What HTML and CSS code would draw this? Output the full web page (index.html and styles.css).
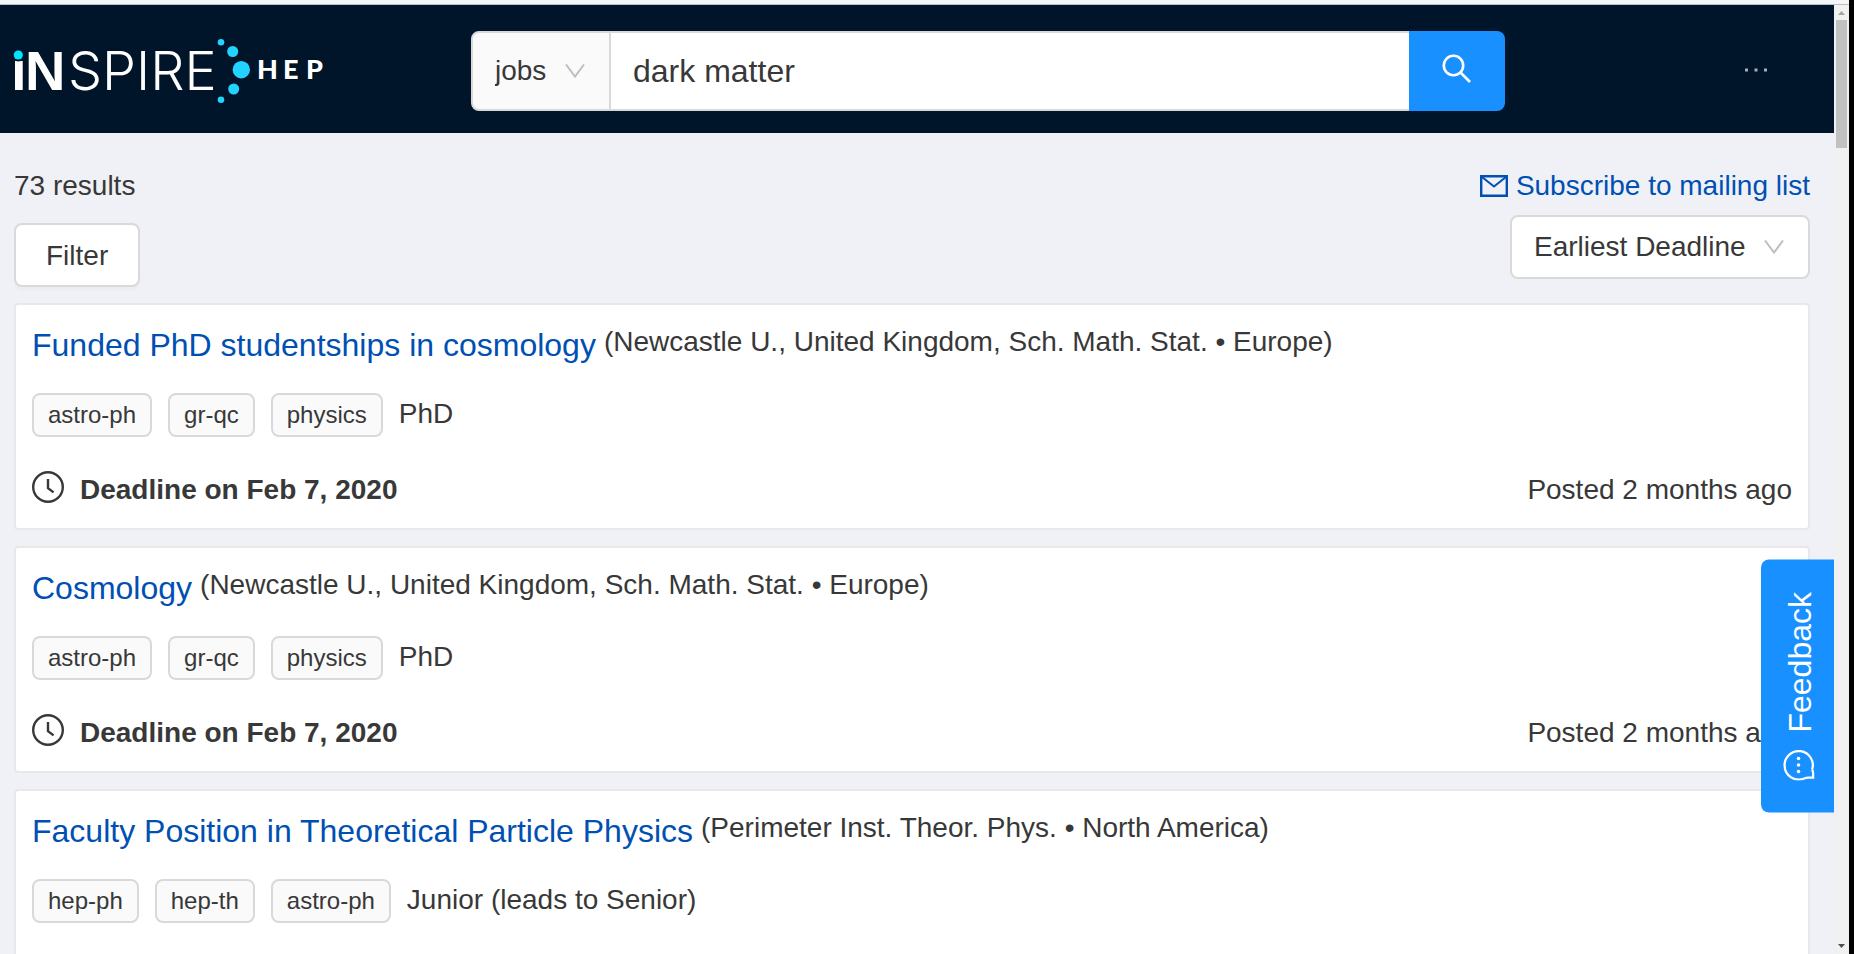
FILE: index.html
```html
<!DOCTYPE html>
<html lang="en">
<head>
<meta charset="utf-8">
<title>dark matter - jobs - INSPIRE</title>
<link rel="stylesheet" href="styles.css">
</head>
<body>
<div class="window">
  <div class="window-top"></div>
  <div class="viewport">
    <div class="page">
      <header class="header">
        <a class="logo" href="#" aria-label="INSPIRE HEP home">
          <svg width="324" height="70" viewBox="0 0 324 70">
            <g class="logo-text">
              <text class="logo-bold" x="11" y="55">ı</text>
              <text class="logo-bold" x="25" y="55">N</text>
              <text class="logo-light" x="68" y="55">SPIRE</text>
              <text class="logo-hep" x="257" y="44">H</text>
              <text class="logo-hep" x="283" y="44">E</text>
              <text class="logo-hep" x="306" y="44">P</text>
            </g>
            <circle cx="18.3" cy="20" r="6.4" fill="#001529"/>
            <circle cx="18.3" cy="20" r="4.6" fill="#00e5ff"/>
            <g fill="#22d3ff">
              <circle cx="221" cy="7.3" r="3.3"/>
              <circle cx="232.7" cy="16.5" r="5.5"/>
              <circle cx="241.3" cy="34.7" r="8.7"/>
              <circle cx="233.7" cy="54" r="5.5"/>
              <circle cx="221" cy="64.7" r="3.3"/>
            </g>
          </svg>
        </a>
        <form class="search">
          <div class="select-box search-scope">
            <select aria-label="Collection"><option>jobs</option></select>
            <svg class="chevron" width="20" height="14" viewBox="0 0 20 14"><path d="M1 0.5 10 12.6 19 0.5"/></svg>
          </div>
          <input class="search-input" type="text" aria-label="Search" value="dark matter">
          <button class="search-button" type="button" aria-label="Search">
            <svg width="30" height="30" viewBox="0 0 30 30"><circle cx="11.5" cy="11.5" r="9.7"/><path d="M18.5 18.5 28 28"/></svg>
          </button>
        </form>
        <button class="more" type="button" aria-label="Menu">
          <svg width="22" height="4" viewBox="0 0 22 4"><path d="M0 .5h3v3H0zM9.500 .5h3v3h-3zM19 .5h3v3h-3z"/></svg>
        </button>
      </header>
      <main class="content">
        <div class="toolbar">
          <div class="toolbar-left">
            <div>73 results</div>
            <button class="filter" type="button">Filter</button>
          </div>
          <div class="toolbar-right">
            <a class="subscribe" href="#">
              <svg width="28" height="22" viewBox="0 0 28 22"><path d="M1.200 1.200h25.600v19.600H1.200z"/><path class="flap" d="M2 2l12 9.500L26 2"/></svg>
              Subscribe to mailing list
            </a>
            <div class="select-box sort">
              <select aria-label="Sort by"><option>Earliest Deadline</option></select>
              <svg class="chevron" width="20" height="14" viewBox="0 0 20 14"><path d="M1 0.5 10 12.6 19 0.5"/></svg>
            </div>
          </div>
        </div>
        <article class="card">
          <div class="card-head"><a class="card-title" href="#">Funded PhD studentships in cosmology</a><span>(Newcastle U., United Kingdom, Sch. Math. Stat. • Europe)</span></div>
          <div class="tags"><span class="tag">astro-ph</span><span class="tag">gr-qc</span><span class="tag">physics</span><span>PhD</span></div>
          <div class="card-foot">
            <strong><svg class="clock" width="32" height="32" viewBox="0 0 32 32"><circle cx="16" cy="16" r="14.800"/><path d="M16 8v9.200l5.600 4.200"/></svg>Deadline on Feb 7, 2020</strong>
            <span>Posted 2 months ago</span>
          </div>
        </article>
        <article class="card">
          <div class="card-head"><a class="card-title" href="#">Cosmology</a><span>(Newcastle U., United Kingdom, Sch. Math. Stat. • Europe)</span></div>
          <div class="tags"><span class="tag">astro-ph</span><span class="tag">gr-qc</span><span class="tag">physics</span><span>PhD</span></div>
          <div class="card-foot">
            <strong><svg class="clock" width="32" height="32" viewBox="0 0 32 32"><circle cx="16" cy="16" r="14.800"/><path d="M16 8v9.200l5.600 4.200"/></svg>Deadline on Feb 7, 2020</strong>
            <span>Posted 2 months ago</span>
          </div>
        </article>
        <article class="card card-last">
          <div class="card-head"><a class="card-title" href="#">Faculty Position in Theoretical Particle Physics</a><span>(Perimeter Inst. Theor. Phys. • North America)</span></div>
          <div class="tags"><span class="tag">hep-ph</span><span class="tag">hep-th</span><span class="tag">astro-ph</span><span>Junior (leads to Senior)</span></div>
        </article>
      </main>
      <button class="feedback" type="button">
        <svg width="32" height="32" viewBox="0 0 34 34"><path d="M15.500 1.700A15 15 0 0 0 2.200 22.500Q3.200 24.500 3.200 27v5h4.600Q9.500 32 11.500 30.900"/><path d="M15.500 1.700A15 15 0 1 1 11.500 30.900"/><g class="dots"><circle cx="9.500" cy="16.500" r="1.900"/><circle cx="16.500" cy="16.500" r="1.900"/><circle cx="23.500" cy="16.500" r="1.900"/></g></svg>
        <span>Feedback</span>
      </button>
    </div>
    <div class="scrollbar">
      <svg width="7" height="4" viewBox="0 0 7 4"><path fill="#a3a3a3" d="M0 4 3.500 0 7 4z"/></svg>
      <div class="track"><div class="thumb"></div></div>
      <svg width="7" height="4" viewBox="0 0 7 4"><path fill="#505050" d="M0 0 3.500 4 7 0z"/></svg>
    </div>
  </div>
</div>
</body>
</html>
```
FILE: styles.css
```css
* { box-sizing: border-box; }

body {
  margin: 0;
  background: #000;
  color: #383838;
  font: 28px/42px "Liberation Sans", Arial, sans-serif;
}

button, input, select { font: inherit; color: inherit; margin: 0; }
a { color: #0050b3; text-decoration: none; }
svg { flex: none; }

.window {
  display: flex;
  flex-direction: column;
  height: 100vh;
  margin-right: 5px;
  overflow: hidden;
}
.window-top { flex: none; height: 5px; background: #f3f6f8; border-bottom: 1px solid #b6bec8; }
.viewport { display: flex; flex: 1; min-height: 0; }
.page { position: relative; flex: 1; min-width: 0; overflow: hidden; background: #f0f1f6; }

.header {
  display: grid;
  grid-template-columns: 471fr 1034fr 329fr;
  align-items: center;
  height: 128px;
  padding-top: 2px;
  background: #001529;
}
.logo { display: flex; }
.logo-text { fill: #fff; font-family: Inter, sans-serif; }
.logo-bold { font-family: "Liberation Sans", Arial, sans-serif; font-size: 56px; font-weight: 700; }
.logo-light { font-size: 54px; font-weight: 300; }
.logo-hep { font-family: Lato, sans-serif; font-size: 27px; font-weight: 900; }

.search { display: flex; height: 80px; margin-top: 2px; }
.select-box { position: relative; display: flex; border: 2px solid #d9d9d9; border-radius: 8px; }
.select-box select {
  appearance: none;
  border: 0;
  border-radius: 8px;
  background: transparent;
  padding: 0 62px 0 22px;
}
.chevron { position: absolute; right: 24px; top: 50%; margin-top: -7px; fill: none; stroke: #bfbfbf; stroke-width: 2; pointer-events: none; }
.search-scope { background: #fafafa; border-radius: 8px 0 0 8px; }
.search-input {
  flex: 1;
  min-width: 0;
  border: solid #d9d9d9;
  border-width: 2px 0;
  border-radius: 0;
  padding: 0 22px;
  background: #fff;
  font-size: 32px;
}
.search-button {
  display: flex;
  align-items: center;
  justify-content: center;
  width: 96px;
  padding: 0 0 4px;
  border: 0;
  border-radius: 0 8px 8px 0;
  background: #1890ff;
}
.search-button svg { fill: none; stroke: #fff; stroke-width: 2.6; }
.more { display: flex; justify-self: end; margin-right: 47px; padding: 20px; border: 0; background: none; }
.more svg { fill: #a6adb4; }

.content { padding: 32px 24px 0 14px; }
.toolbar { display: flex; justify-content: space-between; margin-bottom: 16px; }
.toolbar-left, .toolbar-right { display: flex; flex-direction: column; }
.toolbar-left { align-items: flex-start; gap: 16px; }
.toolbar-right { align-items: flex-end; gap: 8px; }
.filter {
  height: 64px;
  padding: 2px 30px 0;
  border: 2px solid #d9d9d9;
  border-radius: 8px;
  background: #fff;
  box-shadow: 0 4px 0 rgba(0, 0, 0, .015);
}
.subscribe { display: flex; align-items: center; gap: 8px; }
.subscribe svg { fill: none; stroke: #0050b3; stroke-width: 2.4; }
.subscribe .flap { stroke-width: 2; }
.sort { height: 64px; background: #fff; }

.card {
  margin-bottom: 16px;
  padding: 16px;
  border: 2px solid #e8e8e8;
  border-radius: 4px;
  background: #fff;
}
.card-last { padding-bottom: 90px; }
.card-head { display: flex; align-items: flex-start; gap: 8px; }
.card-title { font-size: 32px; line-height: 48px; }
.tags { display: flex; align-items: flex-start; gap: 16px; margin: 24px 0 32px; }
.tag {
  padding: 0 14px;
  border: 2px solid #d9d9d9;
  border-radius: 8px;
  background: #fafafa;
  font-size: 24px;
  line-height: 40px;
}
.card-foot { display: flex; justify-content: space-between; height: 43px; }
.clock { margin-right: 16px; vertical-align: -4px; fill: none; stroke: #383838; stroke-width: 2.4; }

.feedback {
  position: absolute;
  right: 0;
  top: 555px;
  display: flex;
  align-items: center;
  gap: 16px;
  width: 73px;
  padding: 32px 4px 32px 0;
  border: 0;
  border-radius: 0 8px 8px 0;
  background: #1890ff;
  color: #fff;
  font-size: 32px;
  line-height: 42px;
  writing-mode: vertical-rl;
  transform: rotate(180deg);
}
.feedback svg { fill: none; stroke: #fff; stroke-width: 2.4; transform: rotate(90deg); }
.feedback .dots { fill: #fff; stroke: none; }

.scrollbar {
  display: flex;
  flex-direction: column;
  align-items: center;
  width: 15px;
  padding: 6px 0;
  background: #f1f1f1;
}
.track { flex: 1; padding: 5px 0; }
.thumb { width: 11px; height: 128px; background: #c1c1c1; }
```
